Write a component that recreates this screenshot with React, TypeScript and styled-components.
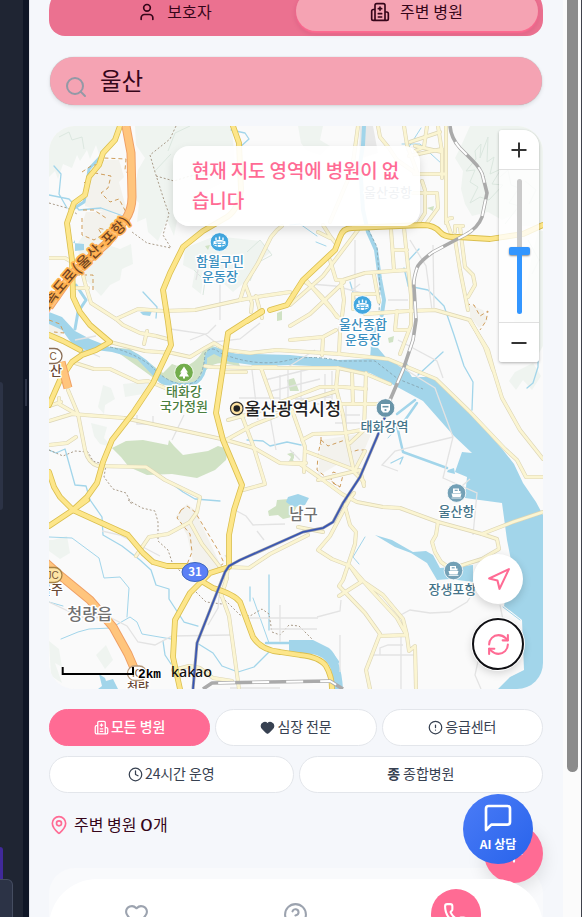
import React from "react";
import styled, { createGlobalStyle, css } from "styled-components";
import { User, Search, Heart, CircleAlert, Clock, MapPin, CircleHelp, Phone, RefreshCw, Navigation, Plus } from "lucide-react";

const Global = createGlobalStyle`
  *, *::before, *::after { box-sizing: border-box; }
  html, body, #root { margin: 0; height: 917px; overflow: hidden; }
  body { background: #f5f7fb; font-family: "Noto Sans CJK KR", "Noto Sans", sans-serif; color: #36061a; }
  button { font-family: inherit; padding: 0; margin: 0; border: 0; cursor: pointer; }
  svg { display: block; flex: none; }
`;

const Shell = styled.div`
  display: flex;
  width: 582px;
  height: 917px;
  overflow: hidden;
`;
const DarkPane = styled.aside`
  width: 23px;
  flex: none;
  background: #1f2533;
  display: flex;
  flex-direction: column;
`;
const PaneCard = styled.div`
  flex: none;
  margin-top: 382px;
  width: 3px;
  height: 128px;
  background: #2c3346;
  border-radius: 0 6px 6px 0;
`;
const PaneAccent = styled.div`
  flex: none;
  margin-top: 337px;
  width: 3px;
  height: 32px;
  background: #40299a;
  border-radius: 0 4px 0 0;
`;
const PaneInput = styled.div`
  flex: none;
  width: 13px;
  height: 40px;
  background: #2c3346;
  border: 1px solid #454d61;
  border-left: 0;
  border-radius: 0 6px 0 0;
`;
const Splitter = styled.div`
  width: 6px;
  flex: none;
  background: #0f1626;
  padding: 379px 0 0 2px;
`;
const Grip = styled.div`
  width: 2px;
  height: 27px;
  background: #2c3346;
`;
const Phoneview = styled.main`
  width: 534px;
  flex: none;
  padding: 0 20px 0 19px;
  background: #f5f7fb;
  border-left: 1px solid #e6e8ed;
  display: flex;
  flex-direction: column;
`;
const ScrollGutter = styled.div`
  width: 18px;
  flex: none;
  background: #fbfbfb;
  padding-left: 4px;
`;
const ScrollThumb = styled.div`
  width: 11px;
  height: 772px;
  background: #8b8b8b;
  border-radius: 0 0 6px 6px;
`;
const Edge = styled.div`
  width: 1px;
  flex: none;
  background: #3f424b;
`;

const Tabs = styled.nav`
  flex: none;
  height: 50px;
  margin-top: -14px;
  padding: 5px;
  display: flex;
  border-radius: 24px 24px 16px 16px;
  background: #eb7190;
`;
const Tab = styled.button<{ $active?: boolean }>`
  flex: 1;
  display: flex;
  align-items: center;
  justify-content: center;
  gap: 10px;
  border-radius: 20px;
  background: transparent;
  color: #36061a;
  font-size: 16px;
  letter-spacing: 0.1px;
  padding: 1px 1px 0 0;
  span { margin-top: -2px; }
  ${(p) => p.$active && css`
    background: #f5a3b3;
    box-shadow: 0 2px 2px #ff6b91, 0 3px 5px rgba(130, 20, 70, 0.18);
  `}
`;
const SearchBar = styled.div`
  flex: none;
  height: 48px;
  margin: 21px 1px 0;
  border-radius: 24px;
  background: #f5a3b3;
  box-shadow: 0 0 1px rgba(60, 70, 60, 0.4), 0 2px 4px rgba(0, 0, 0, 0.1);
  display: flex;
  align-items: center;
  padding: 0 14px;
  gap: 12px;
  font-size: 23.5px;
  svg { margin-top: 11px; color: #9399a6; }
  span { margin-top: -3px; }
`;

const MapFrame = styled.section`
  position: relative;
  flex: none;
  height: 563px;
  margin-top: 21px;
  border-radius: 26px;
  overflow: hidden;
  background: #f9f9f9;
`;
const Notice = styled.div`
  position: absolute;
  left: 124px;
  top: 20px;
  width: 247px;
  height: 80px;
  padding: 9px 19px;
  border-radius: 16px;
  background: rgba(255, 255, 255, 0.9);
  box-shadow: 0 4px 10px rgba(0, 0, 0, 0.13);
  color: #ff6b94;
  font-size: 19px;
  font-weight: 500;
  line-height: 30px;
  letter-spacing: -0.15px;
  white-space: nowrap;
`;
const ZoomPanel = styled.div`
  position: absolute;
  left: 450px;
  top: 4px;
  width: 40px;
  height: 232px;
  display: flex;
  flex-direction: column;
  border-radius: 3px 16px 3px 3px;
  overflow: hidden;
  box-shadow: 0 1px 3px rgba(0, 0, 0, 0.3);
`;
const ZoomButton = styled.button`
  height: 39px;
  background: #fff;
  display: grid;
  place-items: center;
`;
const ZoomTrack = styled.div`
  flex: 1;
  display: flex;
  flex-direction: column;
  align-items: center;
  padding: 9px 0 8px 1px;
  background: rgba(255, 255, 255, 0.8);
  border: solid #e0e0e0;
  border-width: 1px 0;
`;
const TrackRest = styled.div`
  width: 5px;
  height: 68px;
  border-radius: 3px 3px 0 0;
  background: #cacaca;
`;
const TrackThumb = styled.div`
  width: 21px;
  height: 8px;
  border-radius: 2px;
  background: #3396ff;
  box-shadow: 0 1px 2px rgba(0, 0, 0, 0.45);
`;
const TrackFill = styled.div`
  width: 5px;
  flex: 1;
  border-radius: 0 0 3px 3px;
  background: #3396ff;
`;
const MapActions = styled.div`
  position: absolute;
  right: 19px;
  bottom: 19px;
  display: flex;
  flex-direction: column;
  align-items: center;
  gap: 14px;
`;
const RoundButton = styled.button<{ $focused?: boolean }>`
  width: ${(p) => (p.$focused ? 52 : 50)}px;
  height: ${(p) => (p.$focused ? 52 : 50)}px;
  display: grid;
  place-items: center;
  border-radius: 50%;
  background: #fff;
  color: #ff6b94;
  border: ${(p) => (p.$focused ? "2px solid #101014" : "0")};
  box-shadow: ${(p) => (p.$focused ? "0 0 0 1px #fff, " : "")}0 3px 9px rgba(0, 0, 0, 0.16);
`;

const Filters = styled.div`
  flex: none;
  display: flex;
  flex-direction: column;
  gap: 10px;
  margin-top: 20px;
`;
const FilterRow = styled.div`
  display: flex;
  gap: 5px;
`;
const Filter = styled.button<{ $active?: boolean }>`
  flex: 1;
  height: 37px;
  display: flex;
  align-items: center;
  justify-content: center;
  gap: 2px;
  border: 1px solid ${(p) => (p.$active ? "#ff6b94" : "#e3e6eb")};
  border-radius: 19px;
  background: ${(p) => (p.$active ? "#ff6b94" : "#fff")};
  color: ${(p) => (p.$active ? "#fff" : "#374151")};
  font-size: 14px;
  font-weight: ${(p) => (p.$active ? 500 : 400)};
  letter-spacing: -0.1px;
  span { margin-top: -4px; }
`;
const ListHeading = styled.h2`
  flex: none;
  height: 24px;
  margin: 20px 0 0;
  display: flex;
  align-items: center;
  gap: 5px;
  font-size: 16px;
  font-weight: 400;
  svg { color: #ff6b94; }
  span { margin-top: -3px; }
`;
const Count = styled.b`
  display: inline-block;
  margin: 0 2.5px 0 1.5px;
  font-weight: 400;
  transform: scaleX(1.45);
`;
const ListCard = styled.div`
  flex: none;
  height: 49px;
  margin-top: 31px;
  border-radius: 26px 26px 0 0;
  background: #f9fafc;
  padding-top: 11px;
`;
const BottomNav = styled.nav`
  position: relative;
  z-index: 3;
  height: 70px;
  display: flex;
  padding: 10px 8px;
  border-radius: 48px 48px 0 0;
  background: #fff;
  color: #9ca3af;
`;
const NavItem = styled.div`
  flex: 1;
  display: flex;
  justify-content: center;
  padding-top: 13px;
`;
const CallItem = styled(NavItem)`
  padding: 0 0 0 2px;
`;
const CallButton = styled.button`
  width: 50px;
  height: 50px;
  border-radius: 50%;
  background: #ff6b94;
  color: #fff;
  display: grid;
  place-items: center;
`;
const AddFab = styled.button`
  position: absolute;
  z-index: 2;
  left: 484px;
  top: 824px;
  width: 59px;
  height: 59px;
  border-radius: 50%;
  display: grid;
  place-items: center;
  background: #ff6b94;
  color: #fff;
  box-shadow: 0 5px 18px rgba(0, 0, 0, 0.12);
`;
const ChatFab = styled.button`
  position: absolute;
  z-index: 4;
  left: 463px;
  top: 794px;
  width: 70px;
  height: 70px;
  border-radius: 50%;
  display: flex;
  flex-direction: column;
  align-items: center;
  padding-top: 8px;
  gap: 1px;
  background: linear-gradient(135deg, #4b7cf7, #2863eb);
  color: #fff;
  font-size: 12px;
  font-weight: 700;
  line-height: 18px;
`;

const HospitalIcon = ({ size, stroke = 2 }: { size: number; stroke?: number }) => (
  <svg width={size} height={size} viewBox="0 0 24 24" fill="none" stroke="currentColor" strokeWidth={stroke} strokeLinecap="round" strokeLinejoin="round">
    <path d="M12 6v4M14 14h-4M14 18h-4M14 8h-4M18 12h2a2 2 0 0 1 2 2v6a2 2 0 0 1-2 2H4a2 2 0 0 1-2-2v-9a2 2 0 0 1 2-2h2M18 22V4a2 2 0 0 0-2-2H8a2 2 0 0 0-2 2v18" />
  </svg>
);

const majorRoads = [
  "M120 126L115 140L103 153L99 165L89 177L85 195L74 203L67 223L72 260L73 297L80 312L90 325L110 342L96 350L82 355L72 362L60 380L49 405",
  "M49 335L63 341L80 350",
  "M233 126L239 143L241 190Q238 210 227 217L203 231L183 247L170 273L163 290L168 322L171 345L153 383L133 413L112 440L103 462L97 483L87 497L73 510L49 526",
  "M49 472L54 487L60 497L73 510L128 535L143 553L153 562L167 566L187 566L203 582L213 588Q234 594 240 602L253 637Q261 650 280 652L300 655Q320 657 326 666Q332 676 332 689",
  "M73 510L87 500",
  "M262 311L228 333L223 367L216 413L223 440L242 485L234 510L229 535L229 567L210 573L190 593L175 620L173 657L180 689",
  "M247 321L262 312M270 310L287 305L303 280L335 250L340 237Q343 228 352 228L423 225Q434 225 440 232Q445 238 458 237L490 239L523 234L543 225",
];
const minorRoads = [
  "M49 258H65L72 262M73 288H88M80 263L85 283L91 303L116 319L138 309L163 311L195 310L240 300L263 296L290 292",
  "M116 319L123 325L140 333L156 336L171 340M144 344L147 331M110 342L145 351L172 353L190 357L205 348L214 343L226 350L250 353L277 350L292 351L340 354L388 359L436 379L470 412L505 449L517 460L526 477L543 477",
  "M72 362L94 369L110 369L138 382L148 381L170 390M205 366L212 367L260 368L338 368L366 374L390 384",
  "M68 390L78 414L85 450Q88 463 98 466L146 467L165 480L200 497L197 512L190 522L168 534L149 537L136 556",
  "M49 421L72 414L124 418L185 431L226 440L254 448L280 463L300 464L323 480L342 494L357 502L383 507L400 508L438 522L482 534L513 522L543 512",
  "M59 398V404L78 415M49 406L61 402M49 445L67 443L76 437",
  "M190 522L202 544L220 567M229 567L249 568L270 554L308 535M228 568L225 585L221 594L229 616L236 667L239 689M221 596L227 578",
  "M240 300L245 284L258 263L271 237L277 230L282 226M245 284L252 303L251 312M256 296L262 318",
  "M290 305L323 276L358 230M358 126L352 170L330 222M323 225L330 236L337 245M318 232L330 238",
  "M378 126L380 137L389 148L397 160L417 174M404 126L407 145L417 172M438 126L442 152L415 146M410 142L440 132M415 151L424 147L427 126M409 156L442 149L442 178M446 126L446 220L453 239M414 174L446 174M413 193L437 193L438 208L427 223M422 181L425 190V213L418 224",
  "M330 260L336 280L343 280L365 273L407 270M306 280L323 300L339 318M303 280Q323 294 337 317M341 280L344 300L340 333L339 354M391 230L394 270M404 228L411 295L411 325L400 354M393 250H407M353 294H375M374 275L379 302M290 326L310 314L344 282M290 340L323 337L336 330M323 338L322 355M353 309V295M365 314L408 311L435 310L470 320L485 347L493 370",
  "M397 311L395 330H408M455 239L460 270L468 310M460 227L465 267L473 275L475 285L468 297M446 223Q447 218 452 218M455 232V226H463",
  "M470 321L488 350L494 372L502 398L520 430L543 459",
  "M228 420L257 412L283 401L320 387L343 387L366 389M226 440L253 425L291 410M261 368L276 410L337 391M253 367L276 367M246 372L224 372M239 408L254 448L265 484L243 490M292 410L305 447L304 472M338 368L336 388L343 415L347 440L354 472L364 482",
  "M366 373L364 430L350 443M352 374L353 404M335 404H380M302 440L313 434L345 433L378 427M305 451L355 470L365 451M318 480L360 470L364 486M290 463H306",
  "M354 493L349 500L330 536L318 550L332 559L350 566L372 591L397 618L407 636L409 651L415 646L416 689M344 503L350 525L356 532L355 544L343 580L339 586L365 613L380 634L366 670L370 689M350 566L361 582L339 596M364 582L383 595L403 619L407 635L380 636M323 532L298 527",
  "M438 522L436 535L432 542L435 552L441 562L451 569L469 563L482 559L499 549L497 539L482 534",
  "M173 670L189 666L200 668L213 678L232 681",
];
const streets = [
  "M91 325L105 339M75 340L96 336M62 340L100 357M280 375V410M265 380L310 369M268 392L320 379M288 370V404M301 370V401M295 399L331 397M239 398H280M252 370L258 420M270 416L276 450M290 450L300 460M235 410L256 403",
  "M325 374V408M332 371V400M317 404H357M335 415H360M335 423H360M346 403V430M315 350L288 367M355 240V298M410 240L426 266L432 310M433 245L434 309M388 300H408M298 283L335 286L370 295M352 290L360 284",
  "M398 365L435 388L453 437L443 478L477 493L473 535M398 471L382 465L395 451L453 437M357 435L373 421",
  "M170 329L205 334L215 342L240 339L260 323M137 415V424H153V416M172 440L184 415M190 340L208 333L216 325M220 280V320M200 260L196 280",
  "M102 531L120 535L160 556M49 602L81 617L111 618L127 626L138 642L155 645L172 636L230 635M208 625L218 608L220 584M264 540L257 531M225 555L230 563M233 509L246 516L253 525L285 524M280 642V605M246 618H318M270 629H317M230 688H280M340 635V672M373 655H415",
  "M397 617L410 610L430 613L450 612L467 602L475 590M500 605L503 620M481 689L475 675L480 652L488 645M401 635V689M380 655V648L388 645H403M317 617L340 611L341 600M455 492L470 479M398 340L437 361L443 378",
];

function RoadSet({ paths, outer, inner, wide, narrow }: { paths: string[]; outer: string; inner: string; wide: number; narrow: number }) {
  return (
    <g fill="none" strokeLinecap="round" strokeLinejoin="round">
      {paths.map((d, i) => <path key={"o" + i} d={d} stroke={outer} strokeWidth={wide} />)}
      {paths.map((d, i) => <path key={"i" + i} d={d} stroke={inner} strokeWidth={narrow} />)}
    </g>
  );
}

function Label({ x, y, lines, color, size = 13, weight = 500 }: { x: number; y: number; lines: string[]; color: string; size?: number; weight?: number }) {
  return (
    <text textAnchor="middle" fill={color} stroke="#fff" strokeWidth="3" strokeLinejoin="round" paintOrder="stroke" fontSize={size} fontWeight={weight}>
      {lines.map((l, i) => <tspan key={l} x={x} y={y + i * 15}>{l}</tspan>)}
    </text>
  );
}

const Badge = ({ x, y, color, children }: { x: number; y: number; color: string; children: React.ReactNode }) => (
  <g transform={`translate(${x} ${y})`}>
    <circle r="9.3" fill={color} stroke="#fff" strokeWidth="0.8" />
    {children}
  </g>
);
const Stadium = () => (
  <g>
    <path d="M-6 -.5Q0 -4 6 -.5V3Q0 7 -6 3Z" fill="#fff" />
    <path d="M-4 .2H4M-2.3 1V5M2.3 1V5M-5.5 2.5H5.5" stroke="#42a7df" strokeWidth=".9" />
    <path d="M-3.5 -2V-4.5M0 -2.5V-5.5M3.5 -2V-4.5" stroke="#fff" strokeWidth="1.4" />
  </g>
);
const Ship = () => (
  <g fill="#fff">
    <path d="M-5 .6H5L4 4H-4Z M-3.5 0V-4.5H2.5V-2H4V0Z" />
    <path d="M-1.8 -2.7H1.2" stroke="#73a0b6" strokeWidth="1.2" />
    <path d="M-5 5H5" stroke="#fff" strokeWidth=".8" />
  </g>
);

function CityMap() {
  return (
    <svg width="494" height="563" viewBox="49 126 494 563">
      <rect x="49" y="126" width="494" height="563" fill="#fafafa" />
      <g fill="#eff4f0">
        <path d="M49 126H118L113 142L99 154L96 145L90 159L87 150L80 161L77 155L72 168L63 164L58 179L55 171L49 177Z" />
        <path d="M135 126H232L235 167L220 172L222 183L208 190L204 206L190 204L190 222L177 221L174 236L167 220L158 241L148 232L146 218L137 222L139 203L133 197L138 170L145 158L136 145Z" />
        <path d="M93 220L104 225L108 245L120 249L131 244L133 264L122 269L120 280L110 285L101 296L90 284L80 274L78 243Z" />
        <path d="M185 248L215 236L260 241L271 252L257 263L246 281L233 292L222 282L203 280L201 294L192 287L195 271L183 265Z" />
        <path d="M470 126H543V226L522 226L515 214L502 220L488 212L472 216L465 204L461 189L463 171L455 158L461 146Z" />
        <path d="M298 126H323L320 140L330 146L320 155L306 150L301 143Z M538 230L531 260L526 290L514 320L522 350L535 360L543 346V231Z M515 372L533 363L541 376L532 390L523 380L516 390L509 381Z" />
        <path d="M53 540L67 536L70 553L60 559L49 551V540Z M106 645L113 660L105 669L96 655Z M49 641L59 649L62 667L55 663L62 683L51 676Z M103 385L111 388L115 399L105 405L104 414L98 407Z M91 423L107 427L104 438L112 447L100 444L94 436Z M123 384L153 381L149 393L125 397Z" />
      </g>
      <g fill="none" stroke="#dbe7df" strokeWidth="1">
        <path d="M475 151L481 144L480 158L488 137L487 162L494 157L490 174L501 169L492 184L503 185L489 200L480 197L470 203L478 187L470 182L475 170L466 171L476 159ZM500 177L508 170L511 185L519 188L509 203L519 206L505 224M520 140L530 152L525 166M525 181L536 190L529 204M528 240L539 260L532 274" />
        <path d="M59 137L69 132L72 140L82 137L84 149M168 151L175 133L190 126M155 171L171 154M247 252L260 240L272 255L257 263L250 281M194 270L205 281L203 295" />
      </g>
      <path fill="#f3f2ed" d="M101 160H119L124 177L119 182L128 215L106 213L85 206L85 187Z M86 212H104L125 217L116 242L85 241L82 224Z M346 436L372 432L360 460L350 469L340 463L318 476L321 440Z M181 510L187 504L195 510L205 532L221 566L207 573L193 561L187 535L176 516Z M470 305L483 310L488 320L479 328L470 317Z M49 318L58 320L65 330L60 336H49Z" />
      <path fill="#e8e8e8" d="M360 126H373L378 153L359 159Z" />
      <g fill="#d0e2c4">
        <path d="M110 347L130 349L163 373L172 364Q190 372 203 351L210 345L235 354L240 366L221 363Q206 364 201 380L185 386L163 385L144 371Z" />
        <path d="M112 448L126 441L143 440L168 445L169 440L174 446L183 455L208 451L218 446L228 449L226 460L215 470L197 478L172 474L147 475L129 467L121 457Z" />
        <path d="M268 511L276 506L277 500L289 499L297 506L292 517L283 519L278 515L269 516Z M287 380L294 378L299 391L290 391ZM289 461L292 455L294 463ZM388 338L394 336L393 342L389 343ZM427 208L434 206L433 211ZM277 313L282 311V320L277 321ZM287 454L294 452V459Z M205 246L210 245L208 250Z" />
      </g>
      <g fill="#a2d5ea">
        <path d="M49 312L62 317L75 331L90 339L110 347L130 350Q147 357 162 376Q176 386 193 382Q203 378 204 365Q204 348 215 347Q233 356 255 354L290 355L338 360L370 359L371 346L378 348L389 361L405 366L412 377H430L438 381L472 415L503 450L514 464L523 483L536 502L543 515V689H498L510 677L524 670L522 620L504 606L512 565L507 540L502 503L465 498L467 477L455 472L462 452L472 453L453 435L423 401L390 383L370 373L335 367L290 365L260 366L230 362L214 354L207 358Q208 377 197 384Q177 391 160 383L137 359L112 352L96 350L86 354L78 352L62 330L49 324Z" />
        <path d="M375 535L392 540L413 552L426 551L433 555L440 568L473 565V582L450 579L437 580L427 563L411 553L395 547Z" />
        <path d="M99 674L105 678L106 681L113 679L118 689H98L102 686Z M289 640H313L329 648Q341 658 343 689H333Q335 659 313 654L289 653Z M75 240L75 251L84 250V244L73 243ZM140 312L152 311L150 316L143 315ZM288 497L298 494L309 498L305 505L293 507L286 502Z M407 363L410 369L404 367Z M448 470L454 468L455 474L447 472Z" />
      </g>
      <g fill="none" stroke="#a2d5ea" strokeLinecap="round" strokeLinejoin="round">
        <path strokeWidth="4" d="M364 126L363 145L360 164L363 210L368 232L376 250L380 279L384 300L381 320L372 335L373 349" />
        <path strokeWidth="3" d="M113 142L104 153L89 169L86 192L84 202L73 209M76 285L86 300L78 312L75 329" />
        <path strokeWidth="2.5" d="M417 403L403 423L397 426L403 452L447 468M415 400L397 414" />
        <path strokeWidth="1.3" d="M49 195L69 199L79 210L101 208L123 216M54 166L61 174L59 194L67 208M231 130L245 133L249 139L239 148M419 249L407 262L408 286L428 290L444 306L454 335L464 366L473 382L472 410M408 285L404 268M418 375L443 352M538 350L538 367L533 383L527 388M88 497L102 517L103 535L122 546L140 560L151 570L156 585L169 589L169 599L184 622L198 626M163 641L165 655L171 664" />
        <path strokeWidth="1" d="M49 537L72 538L99 558L104 578L120 577L129 588L127 617M49 602L63 606M61 639L78 632L89 629L111 628L130 617L137 622L142 634L171 639" />
        <path strokeWidth="1.3" d="M49 450L56 453L65 449L75 485L86 486L90 500M247 440L263 441L270 446L287 442L301 445M197 643L213 653L222 666L238 672L254 667L269 652M143 292L157 307L156 318M350 282L356 302L362 312M391 463L403 457L400 464M164 478L183 492L195 499L220 501M250 587L250 601M269 575L269 630" />
        <path strokeWidth="1" d="M402 144H420L442 164M421 128L407 150M290 225L300 224L317 236M316 242L326 246M365 537L353 557L359 564M503 607L520 620M403 421L388 438M253 598L269 643" />
        <path strokeWidth="2.5" d="M266 643H306Q328 646 338 662" />
      </g>
      <g fill="none" stroke="#a99b89" strokeWidth="1" strokeDasharray="2 2">
        <path d="M176 126L170 139L150 155L155 172L164 200L169 214L163 235L171 248L147 243L132 232M156 176L174 181L190 176L210 174M49 203L67 208L77 214" />
        <path d="M49 450L63 456L75 451L88 452L93 461L106 465L104 477L113 489L126 493L132 505M128 500L142 508L155 511L158 522L158 541L168 550L172 562L180 571M196 592L206 602L222 604M225 600L240 615L250 616L262 609L269 614L272 632L280 635L289 625L299 626L313 640" />
      </g>
      <g fill="none" stroke="#cf9e5d" strokeDasharray="4 3">
        <path d="M82 172L91 166L102 163L104 158L126 159L125 170L130 176M84 183L95 173L111 176L108 188L101 193L110 202L119 199L127 214M83 210L94 210L106 218M82 218V235L94 240L102 235L98 228L107 230M49 320L60 324L64 333L54 332M76 275L93 275V293" />
        <path d="M181 510L187 506L195 512L218 550L224 563L215 570M181 510L177 518L190 534L192 552L186 567M321 440L318 455L317 470L331 481L340 487M321 440L328 446L345 440M348 453L358 450L368 450M331 480L333 472L343 475L340 487L331 482M466 304L474 305L480 316L488 311L486 321L480 330M321 437V445" />
      </g>
      <path d="M110 347Q132 352 150 365Q175 391 195 382Q204 374 205 353Q212 345 220 353Q255 367 285 361Q310 354 340 361H375L398 379L423 389M366 225L377 247L380 289L379 313" fill="none" stroke="#8aabb8" strokeDasharray="3 2" />

      <g fill="none" stroke="#e3e3e3" strokeWidth="1.3">{streets.map((d) => <path key={d} d={d} />)}</g>
      <RoadSet paths={minorRoads} outer="#dcd5b6" inner="#fbf5d2" wide={4} narrow={2.8} />
      <RoadSet paths={majorRoads} outer="#dabf4f" inner="#fde68a" wide={5.8} narrow={4.2} />
      <g fill="none" strokeLinejoin="round">
        <path d="M126 126L131 153L132 197Q132 210 125 220L107 243L73 273L49 307M44 561L62 577L90 600L113 627L128 654L143 689M61 362L68 388" stroke="#efa066" strokeWidth="9" />
        <path d="M126 126L131 153L132 197Q132 210 125 220L107 243L73 273L49 307M44 561L62 577L90 600L113 627L128 654L143 689M61 362L68 388" stroke="#ffc57d" strokeWidth="7" />
        <path d="M450 126Q451 138 460 148L472 160Q482 170 483 177L487 193L482 217Q478 228 465 235L433 252Q419 262 417 268Q413 280 414 287L416 320L413 340L403 370L387 407M203 689L212 683L330 681L343 689" stroke="#aaa" strokeWidth="3.6" />
        <path d="M450 126Q451 138 460 148L472 160Q482 170 483 177L487 193L482 217Q478 228 465 235L433 252Q419 262 417 268Q413 280 414 287L416 320L413 340L403 370L387 407M203 689L212 683L330 681L343 689" stroke="#fff" strokeWidth="2" strokeDasharray="17 17" strokeDashoffset="17" />
        <path d="M385 417L377 437L360 477L343 503L333 522L323 528L303 532L240 560L229 566L225 572L197 643L193 689" stroke="#9297a5" strokeWidth="3" />
        <path d="M385 417L377 437L360 477L343 503L333 522L323 528L303 532L240 560L229 566L225 572L197 643L193 689" stroke="#3553b5" strokeWidth="1.5" />
      </g>

      <defs><path id="expressway" d="M39 319L55 294L73 273L105 243L121 227L137 205" /></defs>
      <text fontSize="14" fontWeight="500" fill="#704322" stroke="#ffb04f" strokeWidth="3.4" strokeLinejoin="round" paintOrder="stroke" dy="4">
        <textPath href="#expressway" startOffset="4" textLength="130">고속도로(울산-포항)</textPath>
      </text>

      <Badge x={219.5} y={242} color="#42a7df"><Stadium /></Badge>
      <Label x={220} y={266} lines={["함월구민", "운동장"]} color="#3a8fc0" />
      <Badge x={362.5} y={305} color="#42a7df"><Stadium /></Badge>
      <Label x={363} y={329} lines={["울산종합", "운동장"]} color="#3a8fc0" />
      <Label x={388} y={197} lines={["울산공항"]} color="#6d8296" />
      <Badge x={184} y={372.5} color="#72ad4c"><path d="M0 -6L4 0H2.5L5 4H1V6H-1V4H-5L-2.5 0H-4Z" fill="#fff" /></Badge>
      <Label x={184} y={396} lines={["태화강", "국가정원"]} color="#4b8040" />
      <Badge x={385.5} y={408} color="#6894a8"><path d="M-4.5 -4H4.5V2L2.5 4.5H-2.5L-4.5 2Z" fill="#fff" /><path d="M-3 -1.3H3" stroke="#6894a8" strokeWidth="1.6" /><circle cy="2" r="1.1" fill="#6894a8" /></Badge>
      <Label x={384.5} y={431} lines={["태화강역"]} color="#457489" />
      <Badge x={456.5} y={493} color="#73a0b6"><Ship /></Badge>
      <Label x={456.5} y={516} lines={["울산항"]} color="#457489" />
      <Badge x={453.5} y={570.5} color="#73a0b6"><Ship /></Badge>
      <Label x={452.5} y={594} lines={["장생포항"]} color="#457489" />
      <circle cx="236.8" cy="408.5" r="6.3" fill="#ffe3a2" stroke="#33312e" strokeWidth="1.2" />
      <circle cx="236.8" cy="408.5" r="3.3" fill="#222" />
      <Label x={292.7} y={415} lines={["울산광역시청"]} color="#222" size={17.5} />
      <Label x={303.5} y={520} lines={["남구"]} color="#707070" size={15.5} />
      <Label x={89.7} y={620} lines={["청량읍"]} color="#707070" size={16.2} />

      <ellipse cx="195" cy="572" rx="13" ry="9.5" fill="#5b80f6" stroke="#3963bd" />
      <text x="195" y="576.3" textAnchor="middle" fill="#fff" fontSize="11.5" fontWeight="700">31</text>
      <Label x={50} y={375} lines={["울산"]} color="#694935" />
      <Label x={51} y={594} lines={["울주"]} color="#694935" />
      <Label x={138} y={692} lines={["청량"]} color="#694935" size={12} />
      <g strokeWidth="1.3">
        <rect x="42" y="348.5" width="20" height="15" rx="7.5" fill="#fff" stroke="#8a6e56" />
        <rect x="38" y="567.5" width="24" height="15" rx="7.5" fill="#ffe4a4" stroke="#a78345" />
        <rect x="127.5" y="666" width="19" height="14.5" rx="7.2" fill="#fff" stroke="#b5997c" />
      </g>
      <g fontSize="10" fill="#7c5a3a" textAnchor="middle" fontFamily="Liberation Sans, sans-serif">
        <text x="53" y="359.7">C</text>
        <text x="52.5" y="578.7">JC</text>
        <text x="137" y="677">IC</text>
      </g>

      <path d="M62.7 667V674H133V667" fill="none" stroke="#000" strokeWidth="2" />
      <text x="138" y="678" fontFamily="Liberation Mono, monospace" fontSize="12.5" fontWeight="700" fill="#000" stroke="#fff" strokeWidth="2" paintOrder="stroke" textLength="23" lengthAdjust="spacingAndGlyphs">2km</text>
      <text x="171" y="677" fontFamily="Noto Sans, sans-serif" fontSize="15" fontWeight="500" fill="#111" textLength="41" lengthAdjust="spacingAndGlyphs">kakao</text>
    </svg>
  );
}

export default function App() {
  return (
    <>
      <Global />
      <Shell>
        <DarkPane><PaneCard /><PaneAccent /><PaneInput /></DarkPane>
        <Splitter><Grip /></Splitter>
        <Phoneview>
          <Tabs>
            <Tab><User size={20} /><span>보호자</span></Tab>
            <Tab $active><HospitalIcon size={20} /><span>주변 병원</span></Tab>
          </Tabs>
          <SearchBar><Search size={24} strokeWidth={2} /><span>울산</span></SearchBar>
          <MapFrame>
            <CityMap />
            <Notice>현재 지도 영역에 병원이 없<br />습니다</Notice>
            <ZoomPanel>
              <ZoomButton><svg width="16" height="16" viewBox="0 0 16 16"><path d="M8 .5v15M.5 8h15" stroke="#333" strokeWidth="2" /></svg></ZoomButton>
              <ZoomTrack><TrackRest /><TrackThumb /><TrackFill /></ZoomTrack>
              <ZoomButton><svg width="16" height="16" viewBox="0 0 16 16"><path d="M.5 8h15" stroke="#333" strokeWidth="2" /></svg></ZoomButton>
            </ZoomPanel>
            <MapActions>
              <RoundButton><Navigation size={25} strokeWidth={2} /></RoundButton>
              <RoundButton $focused><RefreshCw size={25} strokeWidth={2} /></RoundButton>
            </MapActions>
          </MapFrame>
          <Filters>
            <FilterRow>
              <Filter $active><HospitalIcon size={15} /><span>모든 병원</span></Filter>
              <Filter><Heart size={15} fill="currentColor" /><span>심장 전문</span></Filter>
              <Filter><CircleAlert size={15} /><span>응급센터</span></Filter>
            </FilterRow>
            <FilterRow>
              <Filter><Clock size={15} /><span>24시간 운영</span></Filter>
              <Filter><span><b>종</b> 종합병원</span></Filter>
            </FilterRow>
          </Filters>
          <ListHeading><MapPin size={20} strokeWidth={2} /><span>주변 병원 <Count>0</Count>개</span></ListHeading>
          <ListCard>
            <BottomNav>
              <NavItem><Heart size={25} /></NavItem>
              <NavItem><CircleHelp size={25} /></NavItem>
              <CallItem><CallButton><Phone size={25} /></CallButton></CallItem>
            </BottomNav>
          </ListCard>
        </Phoneview>
        <ScrollGutter><ScrollThumb /></ScrollGutter>
        <Edge />
        <AddFab><Plus size={26} /></AddFab>
        <ChatFab>
          <svg width="32" height="32" viewBox="0 0 24 24" fill="none" stroke="currentColor" strokeWidth="2" strokeLinejoin="round"><path d="M21 15a2 2 0 0 1-2 2H7l-4 4V5a2 2 0 0 1 2-2h14a2 2 0 0 1 2 2z" /></svg>
          AI 상담
        </ChatFab>
      </Shell>
    </>
  );
}
